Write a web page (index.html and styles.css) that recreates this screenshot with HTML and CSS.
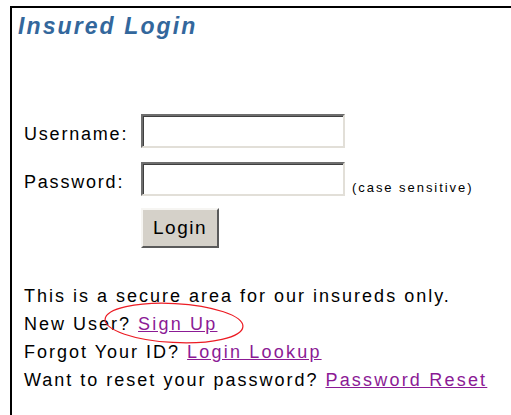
FILE: index.html
```html
<!DOCTYPE html>
<html>
<head>
<meta charset="utf-8">
<title>Insured Login</title>
<link rel="stylesheet" href="styles.css">
</head>
<body>
<div class="frame">
  <h1 class="title">Insured Login</h1>
  <form class="login-form">
    <label class="label" for="user">Username:</label>
    <div class="field"><input class="text-input" id="user" type="text"></div>
    <label class="label" for="pass">Password:</label>
    <div class="field"><input class="text-input" id="pass" type="password"><span class="hint">(case sensitive)</span></div>
    <span></span>
    <div class="field"><button class="btn" type="button">Login</button></div>
  </form>
  <div class="info">
    <p class="line">This is a secure area for our insureds only.</p>
    <p class="line">New User? <span class="circled"><a href="#" class="link">Sign Up</a><svg class="ring" width="144" height="46" viewBox="0 0 144 46"><ellipse cx="72" cy="23" rx="69" ry="19.5" fill="none" stroke="#ec1c24" stroke-width="1.2" transform="rotate(3 72 23)"/></svg></span></p>
    <p class="line">Forgot Your ID? <a href="#" class="link">Login Lookup</a></p>
    <p class="line">Want to reset your password? <a href="#" class="link">Password Reset</a></p>
  </div>
</div>
</body>
</html>
```
FILE: styles.css
```css
html, body {
  margin: 0;
  padding: 0;
  background: #fff;
}
body {
  font-family: "Liberation Sans", Arial, sans-serif;
  color: #000;
  padding: 6px 0 0 10px;
  height: 415px;
  box-sizing: border-box;
  overflow: hidden;
}
.frame {
  border-top: 2px solid #000;
  border-left: 2px solid #000;
  height: 100%;
  box-sizing: border-box;
}
.title {
  margin: 4px 0 0 6px;
  font-size: 23px;
  line-height: 28px;
  font-weight: bold;
  font-style: italic;
  color: #33679c;
  letter-spacing: 2.1px;
}
.login-form {
  display: grid;
  grid-template-columns: 117px auto;
  row-gap: 14px;
  margin: 74px 0 0 12px;
  align-items: end;
}
.label {
  font-size: 18px;
  letter-spacing: 1.8px;
  line-height: 34px;
  margin-bottom: -3px;
}
.field {
  display: flex;
  align-items: flex-end;
}
.text-input {
  width: 204px;
  height: 34px;
  box-sizing: border-box;
  margin: 0;
  border: 2px solid;
  border-color: #6e6e6e #e2dfd8 #e2dfd8 #6e6e6e;
  box-shadow: inset 1px 1px 0 #404040;
  background: #fff;
  outline: none;
}
.hint {
  font-size: 13px;
  letter-spacing: 1.95px;
  margin-left: 7px;
  line-height: 20px;
  margin-bottom: -2px;
}
.btn {
  width: 78px;
  height: 40px;
  margin: -2px 0 0 0;
  background: #d5d1c9;
  border: 2px solid;
  border-color: #f6f5f2 #5a5a5a #5a5a5a #f6f5f2;
  font-family: "Liberation Sans", Arial, sans-serif;
  font-size: 19px;
  letter-spacing: 1.5px;
  color: #000;
  padding: 0;
}
.info {
  margin: 34px 0 0 12px;
}
.line {
  margin: 0;
  font-size: 18px;
  line-height: 28px;
  letter-spacing: 2px;
}
.link {
  color: #8b1a95;
  text-decoration: underline;
  letter-spacing: 2.2px;
}
.circled {
  position: relative;
}
.ring {
  position: absolute;
  left: -36px;
  top: -14px;
  pointer-events: none;
}
```
